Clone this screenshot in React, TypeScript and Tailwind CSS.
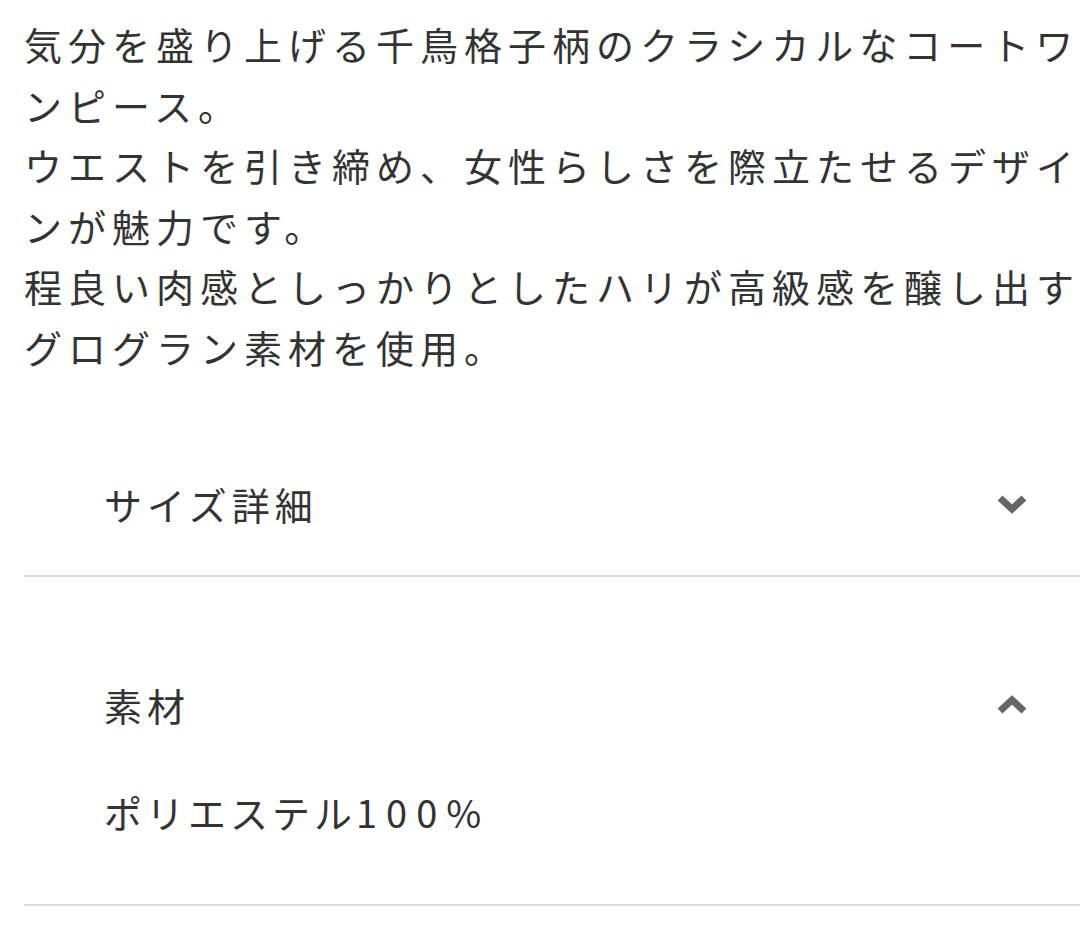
import React, { useState } from 'react'

const descriptionLines = [
  '気分を盛り上げる千鳥格子柄のクラシカルなコートワ',
  'ンピース。',
  'ウエストを引き締め、女性らしさを際立たせるデザイ',
  'ンが魅力です。',
  '程良い肉感としっかりとしたハリが高級感を醸し出す',
  'グログラン素材を使用。',
]

type Item = { title: string; body?: string; gap: string }

const items: Item[] = [
  { title: 'サイズ詳細', gap: 'mt-[61px]' },
  { title: '素材', body: 'ポリエステル', gap: 'mt-[63px]' },
]

const Chevron: React.FC<{ up?: boolean }> = ({ up }) => (
  <svg width="32" height="22" viewBox="0 0 32 22" className={up ? 'rotate-180' : ''}>
    <polyline
      points="4,5 16,16 28,5"
      fill="none"
      stroke="#666666"
      strokeWidth="7"
      strokeLinejoin="miter"
      strokeLinecap="butt"
    />
  </svg>
)

export default function App() {
  // second item is open in the screenshot
  const [open, setOpen] = useState<Record<number, boolean>>({ 1: true })

  return (
    <div
      className="w-[1080px] min-h-[930px] bg-white text-[#333333] overflow-hidden"
      style={{ fontFamily: '"Noto Sans CJK JP", "Noto Sans", sans-serif' }}
    >
      <div className="pl-[24px] pt-[14px] text-[38px] leading-[60.6px] tracking-[6px]">
        {descriptionLines.map((line) => (
          <div key={line} className="whitespace-nowrap">
            {line}
          </div>
        ))}
      </div>

      <div className="ml-[24px]">
        {items.map((item, i) => (
          <div key={item.title} className={`${item.gap} border-b-2 border-[#d9dde3]`}>
            <button
              onClick={() => setOpen({ ...open, [i]: !open[i] })}
              className="w-full flex items-center justify-between pl-[80px] pr-[52px] pt-[35px] pb-[41px] text-left"
            >
              <span className="text-[38px] leading-[60px] tracking-[5px]">{item.title}</span>
              <Chevron up={!!open[i]} />
            </button>
            {open[i] && item.body && (
              <div className="pl-[80px] pt-[6px] pb-[62px] text-[38px] leading-[60px] tracking-[4px]">
                {item.body}
                <span className="tracking-[9px]">100%</span>
              </div>
            )}
          </div>
        ))}
      </div>
    </div>
  )
}
